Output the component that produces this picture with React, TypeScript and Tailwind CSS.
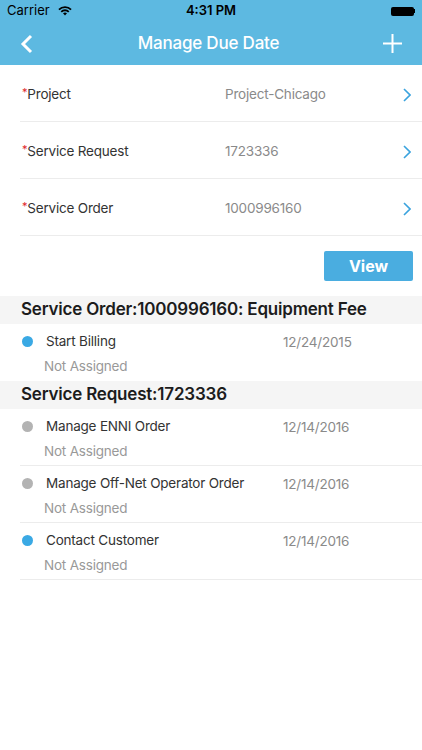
import React from "react";

type Field = { label: string; value: string };
type Task = { title: string; date: string; active: boolean; divider: boolean };

const fields: Field[] = [
  { label: "Project", value: "Project-Chicago" },
  { label: "Service Request", value: "1723336" },
  { label: "Service Order", value: "1000996160" },
];

const sections: { title: string; tasks: Task[] }[] = [
  {
    title: "Service Order:1000996160: Equipment Fee",
    tasks: [{ title: "Start Billing", date: "12/24/2015", active: true, divider: false }],
  },
  {
    title: "Service Request:1723336",
    tasks: [
      { title: "Manage ENNI Order", date: "12/14/2016", active: false, divider: true },
      { title: "Manage Off-Net Operator Order", date: "12/14/2016", active: false, divider: true },
      { title: "Contact Customer", date: "12/14/2016", active: true, divider: true },
    ],
  },
];

const Chevron = () => (
  <svg width="8" height="14" viewBox="0 0 8 14" fill="none">
    <path d="M1 1l6 6-6 6" stroke="#3aa3de" strokeWidth="1.6" />
  </svg>
);

const StatusBar = () => (
  <div className="h-[22px] flex items-center px-[7px] text-[13px] text-black relative">
    <span>Carrier</span>
    <svg width="14" height="10" viewBox="0 0 14 10" className="ml-[8px]">
      <path d="M7 9.5l2-2.2a3 3 0 00-4 0z" fill="#000" />
      <path d="M2.6 5.2a6.2 6.2 0 018.8 0l-1.3 1.4a4.3 4.3 0 00-6.2 0z" fill="#000" />
      <path d="M0.3 2.9a9.5 9.5 0 0113.4 0l-1.3 1.4a7.6 7.6 0 00-10.8 0z" fill="#000" />
    </svg>
    <span className="absolute left-0 right-0 text-center font-semibold">4:31 PM</span>
    <div className="ml-auto flex items-center">
      <div className="w-[23px] h-[9px] bg-black rounded-[2px]" />
      <div className="w-[1.5px] h-[4px] bg-black" />
    </div>
  </div>
);

export default function App() {
  return (
    <div className="w-[422px] h-[750px] bg-white font-['Inter',sans-serif] overflow-hidden">
      <div className="bg-[#5db9e1]">
        <StatusBar />
        <div className="h-[43px] flex items-center justify-between px-[20px]">
          <svg width="14" height="20" viewBox="0 0 14 20" fill="none">
            <path d="M11 2L3 10l8 8" stroke="#fff" strokeWidth="3" />
          </svg>
          <div className="text-white text-[17px] font-medium tracking-[-0.2px]">Manage Due Date</div>
          <svg width="19" height="19" viewBox="0 0 19 19" fill="none">
            <path d="M9.5 0v19M0 9.5h19" stroke="#fff" strokeWidth="2" />
          </svg>
        </div>
      </div>

      <div className="ml-[20px]">
        {fields.map((f) => (
          <div
            key={f.label}
            className="h-[57px] border-b border-[#ececec] flex items-center pt-[3px] pl-[2px] pr-[11px] text-[13.5px] tracking-[-0.2px]"
          >
            <div className="w-[203px] text-[#333]">
              <span className="text-[#e0262b] text-[11px] align-top">*</span>
              {f.label}
            </div>
            <div className="flex-1 text-[#8a8a8a]">{f.value}</div>
            <Chevron />
          </div>
        ))}
      </div>

      <div className="flex justify-end pr-[9px] pt-[15px] pb-[15px]">
        <button className="w-[89px] h-[30px] bg-[#4aade0] rounded-[2px] text-white text-[16px] font-bold">
          View
        </button>
      </div>

      {sections.map((s) => (
        <div key={s.title}>
          <div className="h-[28px] bg-[#f5f5f5] flex items-center px-[21px] text-[17px] font-semibold text-[#1c1c1c] tracking-[-0.2px]">
            {s.title}
          </div>
          <div className="ml-[20px]">
            {s.tasks.map((t) => (
              <div
                key={t.title}
                className={`h-[57px] flex flex-col pt-[6px] text-[13.5px] tracking-[-0.2px] ${t.divider ? "border-b border-[#ececec]" : ""}`}
              >
                <div className="flex items-center h-[22px]">
                  <div className={`w-[11px] h-[11px] rounded-full ml-[2px] ${t.active ? "bg-[#3aa9e4]" : "bg-[#b3b3b3]"}`} />
                  <div className="w-[250px] pl-[13px] text-[#333]">{t.title}</div>
                  <div className="text-[#8a8a8a] pt-[3px]">{t.date}</div>
                </div>
                <div className="pl-[24px] mt-[4px] text-[#999]">Not Assigned</div>
              </div>
            ))}
          </div>
        </div>
      ))}
    </div>
  );
}
